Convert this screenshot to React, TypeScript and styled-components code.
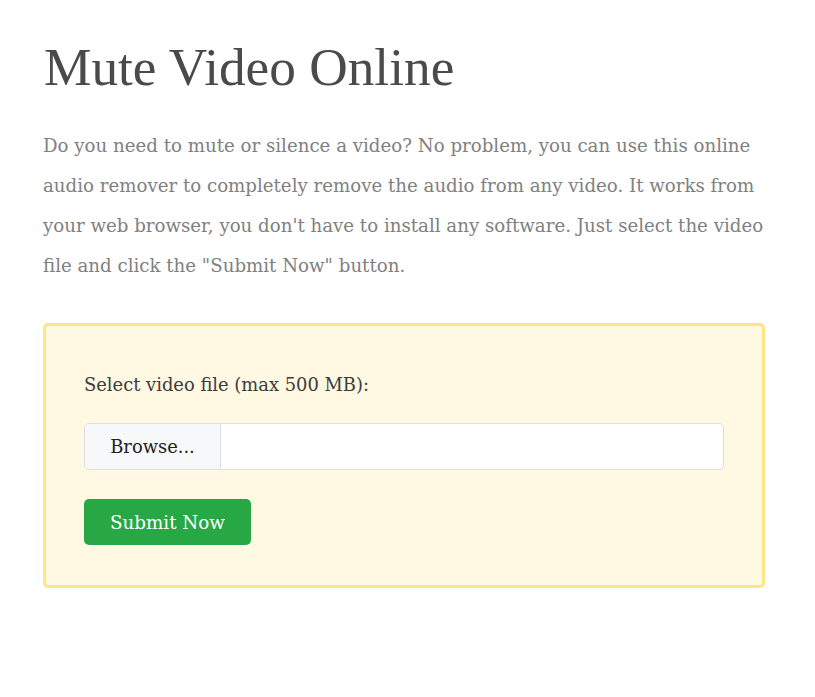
import React from "react";
import styled, { createGlobalStyle } from "styled-components";

const GlobalStyle = createGlobalStyle`
  html, body {
    margin: 0;
    padding: 0;
    background: #ffffff;
  }
  body {
    font-family: "DejaVu Serif", "Liberation Serif", serif;
  }
`;

const Page = styled.main`
  width: 722px;
  padding: 38px 0 0 43px;
`;

const Title = styled.h1`
  margin: 0 0 28px 1px;
  font-family: "Liberation Serif", serif;
  font-weight: 400;
  font-size: 53.3px;
  line-height: 60px;
  color: #4a4a4a;
`;

const Intro = styled.p`
  margin: 0 0 37px;
  font-size: 18.2px;
  line-height: 40px;
  color: #808080;
`;

const Line = styled.span`
  display: block;
  white-space: nowrap;
`;

const UploadBox = styled.form`
  display: flex;
  flex-direction: column;
  align-items: flex-start;
  padding: 45px 38px 40px;
  background: #fff8e2;
  border: 3px solid #ffe585;
  border-radius: 5px;
`;

const Label = styled.label`
  font-size: 17.9px;
  line-height: 27px;
  color: #3c3c3c;
  margin-bottom: 25px;
`;

const FileGroup = styled.div`
  display: flex;
  align-self: stretch;
  height: 47px;
  margin-bottom: 29px;
  border: 1px solid #dcdee2;
  border-radius: 5px;
  overflow: hidden;
  background: #ffffff;
  box-sizing: border-box;
`;

const BrowseButton = styled.span`
  display: flex;
  align-items: center;
  justify-content: center;
  width: 135px;
  background: #f7f8fa;
  border-right: 1px solid #dcdee2;
  font-size: 17.9px;
  color: #222222;
`;

const FileName = styled.span`
  flex: 1;
`;

const SubmitButton = styled.button`
  height: 46px;
  width: 167px;
  padding: 0;
  border: none;
  border-radius: 5px;
  background: #28a745;
  color: #ffffff;
  font-family: "DejaVu Serif", serif;
  font-size: 18.3px;
  cursor: pointer;
`;

const App = () => {
  return (
    <>
      <GlobalStyle />
      <Page>
        <Title>Mute Video Online</Title>
        <Intro>
          <Line>
            Do you need to mute or silence a video? No problem, you can use this online
          </Line>
          <Line>
            audio remover to completely remove the audio from any video. It works from
          </Line>
          <Line>
            your web browser, you don't have to install any software. Just select the video
          </Line>
          <Line>file and click the "Submit Now" button.</Line>
        </Intro>
        <UploadBox onSubmit={(e) => e.preventDefault()}>
          <Label>Select video file (max 500 MB):</Label>
          <FileGroup>
            <BrowseButton>Browse...</BrowseButton>
            <FileName />
          </FileGroup>
          <SubmitButton type="submit">Submit Now</SubmitButton>
        </UploadBox>
      </Page>
    </>
  );
};

export default App;
